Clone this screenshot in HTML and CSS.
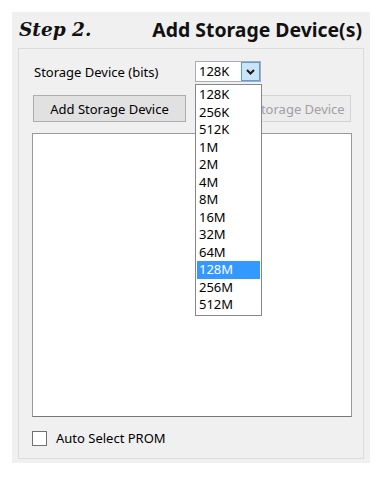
FILE: index.html
```html
<!DOCTYPE html>
<html lang="en">
<head>
    <meta charset="UTF-8">
    <title>Add Storage Device(s)</title>
    <link rel="stylesheet" href="styles.css">
</head>
<body>
    <div class="panel">
        <div class="title">
            <span class="step">Step 2.</span>
            <span class="heading">Add Storage Device(s)</span>
        </div>
        <div class="group">
            <div class="size-row">
                <span class="size-label">Storage Device (bits)</span>
                <div class="combo">
                    <span class="combo-value">128K</span>
                    <span class="combo-btn">
                        <svg width="9" height="6" viewBox="0 0 9 6"><path d="M1 1 L4.5 4.5 L8 1" fill="none" stroke="#1a1a1a" stroke-width="2"/></svg>
                    </span>
                    <ul class="dropdown">
                        <li>128K</li>
                        <li>256K</li>
                        <li>512K</li>
                        <li>1M</li>
                        <li>2M</li>
                        <li>4M</li>
                        <li>8M</li>
                        <li>16M</li>
                        <li>32M</li>
                        <li>64M</li>
                        <li class="selected">128M</li>
                        <li>256M</li>
                        <li>512M</li>
                    </ul>
                </div>
            </div>
            <div class="button-row">
                <button class="btn">Add Storage Device</button>
                <button class="btn" disabled>Remove Storage Device</button>
            </div>
            <div class="device-list"></div>
            <label class="check">
                <span class="check-box"></span>
                <span>Auto Select PROM</span>
            </label>
        </div>
    </div>
</body>
</html>
```

FILE: styles.css
```css
body {
    margin: 12px;
    background-color: #fff;
    font-family: "Noto Sans", "DejaVu Sans", sans-serif;
    font-size: 13px;
    color: #000;
}

.panel {
    width: 358px;
    height: 451px;
    background-color: #f0f0f0;
    display: flex;
    flex-direction: column;
}

.title {
    height: 36px;
    display: flex;
    justify-content: space-between;
    align-items: center;
    padding: 0 8px 2px 7px;
    box-sizing: border-box;
    font-weight: bold;
    font-size: 19.4px;
    color: #111;
}
.title .step {
    font-family: "DejaVu Serif", serif;
    font-style: italic;
    font-size: 18.5px;
}

.group {
    flex: 1;
    margin: 0 6px 4px;
    border: 1px solid #dcdcdc;
    padding: 12px 0 0 13px;
}

.size-row {
    display: flex;
    align-items: center;
    padding-left: 2px;
}
.size-label {
    width: 161px;
}

.combo {
    position: relative;
    box-sizing: border-box;
    width: 66px;
    height: 21px;
    border: 1px solid #abadb3;
    background-color: #fff;
    display: flex;
}
.combo-value {
    flex: 1;
    padding-left: 3px;
    line-height: 19px;
}
.combo-btn {
    box-sizing: border-box;
    width: 19px;
    height: 19px;
    background-color: #cce4f7;
    border: 1px solid #569de5;
    display: flex;
    align-items: center;
    justify-content: center;
}

.dropdown {
    position: absolute;
    top: 22px;
    left: -1px;
    width: 65px;
    margin: 0;
    padding: 1px 0;
    list-style: none;
    background-color: #fff;
    border: 1px solid #828790;
    z-index: 2;
}
.dropdown li {
    height: 17.5px;
    line-height: 17.5px;
    padding-left: 2px;
    margin: 0 1px;
}
.dropdown li.selected {
    background-color: #3399ff;
    color: #fff;
}

.button-row {
    display: flex;
    gap: 9px;
    margin-top: 13px;
}
.btn {
    height: 27px;
    padding: 0;
    border: 1px solid #adadad;
    background-color: #e1e1e1;
    font-family: inherit;
    font-size: 13px;
    color: #000;
}
.btn:first-child {
    width: 153px;
    margin-left: 1px;
}
.btn:disabled {
    width: 156px;
    border-color: #d4d4d4;
    background-color: #ececec;
    color: #a0a0a0;
}

.device-list {
    width: 318px;
    height: 282px;
    margin-top: 11px;
    background-color: #fff;
    border: 1px solid #999;
    border-bottom-color: #777;
}

.check {
    display: flex;
    align-items: center;
    gap: 9px;
    margin-top: 12px;
}
.check-box {
    width: 13px;
    height: 13px;
    border: 1px solid #707070;
    background-color: #fff;
}
```
